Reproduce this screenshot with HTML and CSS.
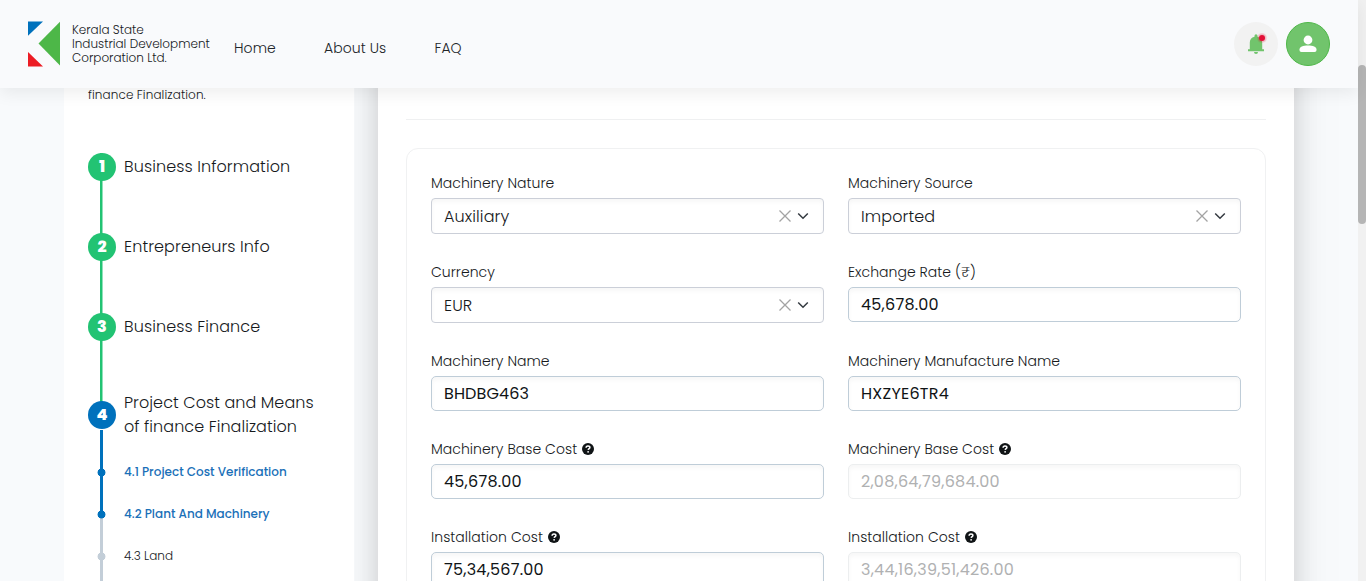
FILE: index.html
```html
<!DOCTYPE html>
<html lang="en">
<head>
<meta charset="utf-8">
<title>Plant And Machinery</title>
<link rel="stylesheet" href="styles.css">
</head>
<body>
<svg class="sprite" width="0" height="0">
  <symbol id="help" viewBox="0 0 12 12"><circle cx="6" cy="6" r="6" fill="#101416"/><path d="M4.1 4.7C4.1 3.5 4.9 2.9 6 2.9S7.9 3.5 7.9 4.5C7.9 5.6 6.4 5.6 6.2 6.8" fill="none" stroke="#fff" stroke-width="1.5"/><circle cx="6.1" cy="8.8" r=".9" fill="#fff"/></symbol>
  <symbol id="clear" viewBox="0 0 12 12"><path d="M.5.5l11 11M11.5.5l-11 11" fill="none" stroke="#a3a3a3" stroke-width="1.3"/></symbol>
  <symbol id="chevron" viewBox="0 0 12 12"><path d="M1.2 3.5L6 8.200l4.800-4.700" fill="none" stroke="#343a40" stroke-width="1.5"/></symbol>
</svg>
<div class="page">
  <div class="app">
    <header class="header">
      <svg class="logo" width="33" height="46" viewBox="0 0 33 46"><path d="M0 .5h15L0 14.800z" fill="#0071bc"/><path d="M0 31v14.500h15z" fill="#ec1c24"/><path d="M32 .8v43.700L10.500 22.600z" fill="#4db748"/></svg>
      <div class="brand"><span>Kerala State</span><span>Industrial Development</span><span>Corporation Ltd.</span></div>
      <nav class="nav"><a>Home</a><a>About Us</a><a>FAQ</a></nav>
      <div class="actions">
        <button class="round bell" aria-label="Notifications"><svg width="24" height="24" viewBox="0 0 24 24"><path d="M4 19.200v-2h1.800V10.500a6 6 0 0 1 4.700-5.800V3.800a1.500 1.500 0 0 1 3 0v.9a6 6 0 0 1 4.700 5.800v6.700H20v2zM10 20.100h4a2 2 0 0 1-4 0z" fill="#71c46c"/><circle cx="18" cy="6" r="5" fill="#e4002b" opacity=".12"/><circle cx="18" cy="6" r="4" fill="#e4002b" opacity=".12"/><circle cx="18" cy="6" r="3" fill="#e30f36"/></svg></button>
        <button class="round user" aria-label="Account"><svg width="18" height="18" viewBox="0 0 18 18" fill="#fff"><circle cx="9" cy="5" r="4.400"/><path d="M.5 14.500C.5 11.500 4 10.400 9 10.400s8.500 1.100 8.500 4.100c0 1.800-.6 2.500-2 2.500h-13c-1.400 0-2-.7-2-2.500z"/></svg></button>
      </div>
    </header>
    <div class="content">
      <aside class="sidebar">
        <p class="intro">finance Finalization.</p>
        <ol class="steps">
          <li class="step"><span class="dot">1</span><span class="name">Business Information</span></li>
          <li class="step"><span class="dot">2</span><span class="name">Entrepreneurs Info</span></li>
          <li class="step"><span class="dot">3</span><span class="name">Business Finance</span></li>
          <li class="step current"><span class="dot">4</span><span class="name">Project Cost and Means<br>of finance Finalization</span></li>
        </ol>
        <ol class="substeps">
          <li class="sub active">4.1 Project Cost Verification</li>
          <li class="sub active last">4.2 Plant And Machinery</li>
          <li class="sub">4.3 Land</li>
        </ol>
      </aside>
      <main class="panel">
        <hr class="rule">
        <form class="card">
          <div class="field"><label>Machinery Nature</label><div class="control select"><span>Auxiliary</span><svg width="12" height="12"><use href="#clear"/></svg><svg width="12" height="12"><use href="#chevron"/></svg></div></div>
          <div class="field"><label>Machinery Source</label><div class="control select"><span>Imported</span><svg width="12" height="12"><use href="#clear"/></svg><svg width="12" height="12"><use href="#chevron"/></svg></div></div>
          <div class="field"><label>Currency</label><div class="control select"><span>EUR</span><svg width="12" height="12"><use href="#clear"/></svg><svg width="12" height="12"><use href="#chevron"/></svg></div></div>
          <div class="field"><label>Exchange Rate (₹)</label><div class="control">45,678.00</div></div>
          <div class="field"><label>Machinery Name</label><div class="control tight">BHDBG463</div></div>
          <div class="field"><label>Machinery Manufacture Name</label><div class="control">HXZYE6TR4</div></div>
          <div class="field"><label>Machinery Base Cost<svg width="12" height="12"><use href="#help"/></svg></label><div class="control">45,678.00</div></div>
          <div class="field"><label>Machinery Base Cost<svg width="12" height="12"><use href="#help"/></svg></label><div class="control disabled">2,08,64,79,684.00</div></div>
          <div class="field"><label>Installation Cost<svg width="12" height="12"><use href="#help"/></svg></label><div class="control">75,34,567.00</div></div>
          <div class="field"><label>Installation Cost<svg width="12" height="12"><use href="#help"/></svg></label><div class="control disabled">3,44,16,39,51,426.00</div></div>
        </form>
      </main>
    </div>
  </div>
  <div class="scrollbar"><div class="thumb"></div></div>
</div>
</body>
</html>
```
FILE: styles.css
```css
* { box-sizing: border-box; }
body { margin: 0; font-family: Poppins, Inter, "Noto Sans", sans-serif; font-weight: 300; color: #16191c; }
.sprite { position: absolute; }
.page { display: flex; height: 581px; overflow: hidden; background: #f8fafc; }
.app { flex: 1; display: flex; flex-direction: column; min-width: 0; }
.header { position: relative; z-index: 3; flex: none; height: 88px; display: flex; align-items: center; padding: 0 28px; background: #f9fafc; box-shadow: 0 5px 16px rgba(0, 0, 0, .07); }
.logo { flex: none; }
.brand { display: flex; flex-direction: column; width: 173px; padding-left: 11px; font-size: 12px; line-height: 14px; white-space: nowrap; }
.nav { display: flex; gap: 48px; padding-top: 8px; font-size: 14px; line-height: 21px; letter-spacing: .1px; white-space: nowrap; color: #212529; }
.actions { display: flex; gap: 8px; margin-left: auto; }
.round { width: 44px; height: 44px; padding: 0; border: 0; border-radius: 50%; display: grid; place-items: center; }
.bell { background: #f2f2f2; }
.user { background: #71c46c; border: 1px solid #4eb748; }
.content { flex: none; display: flex; gap: 24px; height: 580px; padding-left: 64px; }
.sidebar { position: relative; z-index: 2; width: 290px; padding: 0 24px; background: #fff; }
.intro { margin: 0; font-size: 12px; line-height: 14px; letter-spacing: .1px; }
.steps, .substeps { list-style: none; margin: 0; padding: 0; }
.steps { padding-top: 51px; }
.step { display: flex; align-items: flex-start; gap: 8px; height: 80px; background: linear-gradient(90deg, #22c373 2px, #90e1b9 2px) 12px 0 / 3px 100% no-repeat; }
.dot { flex: none; width: 28px; height: 28px; border-radius: 50%; background: #22c373; color: #fff; font-size: 16px; font-weight: 800; line-height: 28px; text-align: center; }
.name { font-size: 16px; line-height: 24px; letter-spacing: .1px; padding-top: 2px; white-space: nowrap; }
.current { height: 58px; background: linear-gradient(90deg, #22c373 2px, #90e1b9 2px) 12px 0 / 3px 10px no-repeat, linear-gradient(#0071bc, #0071bc) 12px 37px / 3px 21px no-repeat; }
.current .dot { margin-top: 8px; background: #0071bc; }
.current .name { margin-top: -2px; padding-top: 0; letter-spacing: .07px; }
.substeps { height: 170px; background: linear-gradient(#c3ced8, #c3ced8) 12px 0 / 3px 100% no-repeat; }
.sub { display: flex; align-items: center; height: 42px; padding-left: 36px; font-size: 12px; letter-spacing: .05px; white-space: nowrap; background: radial-gradient(circle, #c3ced8 3.6px, transparent 4.3px) 9px 50% / 9px 9px no-repeat; }
.sub.active { color: #1a70b8; font-weight: 500; letter-spacing: 0; background: radial-gradient(circle, #0071bc 3.6px, transparent 4.3px) 9px 50% / 9px 9px no-repeat, linear-gradient(#0071bc, #0071bc) 12px 0 / 3px 100% no-repeat; }
.sub.last { background: radial-gradient(circle, #0071bc 3.6px, transparent 4.3px) 9px 50% / 9px 9px no-repeat, linear-gradient(#0071bc, #0071bc) 12px 0 / 3px 50% no-repeat; }
.panel { width: 916px; margin-top: -60px; padding: 91px 28px 0; background: #fff; box-shadow: 0 0 26px rgba(0, 0, 0, .17), 0 0 60px rgba(0, 0, 0, .05); }
.rule { margin: 0 0 28px; border: 0; border-top: 1px solid #eff0f1; }
.card { display: grid; grid-template-columns: 1fr 1fr; align-items: start; gap: 28px 24px; height: 480px; align-content: start; padding: 24px; border: 1px solid #f0f1f2; border-radius: 12px; }
.field label { display: flex; align-items: center; gap: 5px; height: 21px; margin-bottom: 4px; font-size: 14px; line-height: 21px; letter-spacing: .04px; }
.field label svg { margin-bottom: 2px; }
.control { display: flex; align-items: center; height: 35px; padding: 0 12px; border: 1px solid #bfcdd8; border-radius: 5px; font-size: 16px; font-weight: 400; letter-spacing: .24px; color: #101416; background: #fff; box-shadow: inset 0 3px 4px rgba(0, 0, 0, .035); }
.tight { letter-spacing: .12px; }
.select { height: 36px; gap: 6px; padding-right: 14px; border-color: #cbcfd8; border-radius: 4px; font-weight: 300; letter-spacing: .12px; color: #16191c; }
.select span { flex: 1; }
.disabled { border-color: #eceeef; color: #b0b1b2; }
.scrollbar { width: 8px; padding-top: 65px; background: #f1f1f1; }
.thumb { height: 159px; border-radius: 4px; background: #b5b5b5; }
```
